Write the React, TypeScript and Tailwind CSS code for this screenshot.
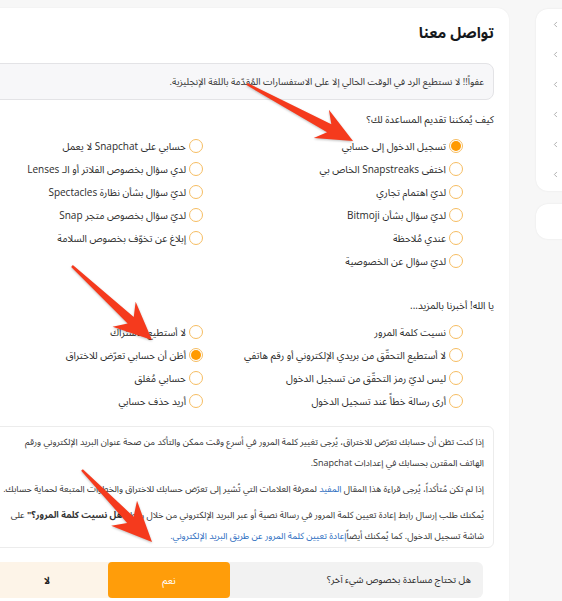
import { ChevronLeft } from "lucide-react";

type Opt = { label: string; checked?: boolean };

const helpRight: Opt[] = [
  { label: "تسجيل الدخول إلى حسابي", checked: true },
  { label: "اختفى Snapstreaks الخاص بي" },
  { label: "لديّ اهتمام تجاري" },
  { label: "لديّ سؤال بشأن Bitmoji" },
  { label: "عندي مُلاحظة" },
  { label: "لديّ سؤال عن الخصوصية" },
];

const helpLeft: Opt[] = [
  { label: "حسابي على Snapchat لا يعمل" },
  { label: "لدي سؤال بخصوص الفلاتر أو الـ Lenses" },
  { label: "لديّ سؤال بشأن نظارة Spectacles" },
  { label: "لديّ سؤال بخصوص متجر Snap" },
  { label: "إبلاغ عن تخوّف بخصوص السلامة" },
];

const moreRight: Opt[] = [
  { label: "نسيت كلمة المرور" },
  { label: "لا أستطيع التحقّق من بريدي الإلكتروني أو رقم هاتفي" },
  { label: "ليس لديّ رمز التحقّق من تسجيل الدخول" },
  { label: "أرى رسالة خطأً عند تسجيل الدخول" },
];

const moreLeft: Opt[] = [
  { label: "لا أستطيع الاشتراك" },
  { label: "أظن أن حسابي تعرّض للاختراق", checked: true },
  { label: "حسابي مُغلق" },
  { label: "أريد حذف حسابي" },
];

function Radio({ checked }: { checked?: boolean }) {
  return (
    <span className="flex h-[14px] w-[14px] shrink-0 items-center justify-center rounded-full border border-[#f6bd62] bg-white">
      {checked && <span className="h-[10px] w-[10px] rounded-full bg-[#ff9a00]" />}
    </span>
  );
}

function OptionColumn({ items }: { items: Opt[] }) {
  return (
    <div className="flex flex-col">
      {items.map((o) => (
        <div key={o.label} className="flex h-[23px] items-center gap-[3px]">
          <Radio checked={o.checked} />
          <span className="whitespace-nowrap text-[10px] leading-[16px] text-[#2b2b2b]">{o.label}</span>
        </div>
      ))}
    </div>
  );
}

function arrowPoints(x1: number, y1: number, x2: number, y2: number, hl: number, hw: number) {
  const len = Math.hypot(x2 - x1, y2 - y1);
  const ux = (x2 - x1) / len;
  const uy = (y2 - y1) / len;
  const px = -uy;
  const py = ux;
  const nx = x2 - ux * (hl - 9);
  const ny = y2 - uy * (hl - 9);
  const bx = x2 - ux * hl;
  const by = y2 - uy * hl;
  const w0 = 1.2;
  const w1 = 4.5;
  const pts = [
    [x1 + px * w0, y1 + py * w0],
    [nx + px * w1, ny + py * w1],
    [bx + px * hw, by + py * hw],
    [x2, y2],
    [bx - px * hw, by - py * hw],
    [nx - px * w1, ny - py * w1],
    [x1 - px * w0, y1 - py * w0],
  ];
  return pts.map((p) => p.join(",")).join(" ");
}

function Arrows() {
  return (
    <svg
      className="pointer-events-none absolute left-0 top-0 drop-shadow-[0_1px_1px_rgba(0,0,0,0.25)]"
      width="562"
      height="601"
    >
      <polygon points={arrowPoints(247, 84, 353, 141, 36, 16)} fill="#f53a1d" />
      <polygon points={arrowPoints(72, 266, 152, 340, 38, 17)} fill="#f53a1d" />
      <polygon points={arrowPoints(82, 470, 152, 542, 40, 18)} fill="#f53a1d" />
    </svg>
  );
}

export default function App() {
  return (
    <div
      dir="rtl"
      className="relative h-[601px] w-[562px] overflow-hidden bg-[#f7f7f7] font-['Open_Sans','Noto_Sans_Arabic',sans-serif]"
    >
      <div className="flex items-start gap-[27px] pt-2">
        {/* side nav, mostly off screen */}
        <aside className="-mr-[34px] mt-px flex w-[60px] shrink-0 flex-col gap-[13px]">
          <div className="flex flex-col rounded-xl bg-white pb-[2px] shadow-[0_0_2px_rgba(0,0,0,0.08)]">
            {[0, 1, 2, 3, 4, 5].map((i) => (
              <div key={i} className="flex h-[30px] items-center justify-end pl-[15px]">
                <ChevronLeft size={9} strokeWidth={1.5} className="text-[#777]" />
              </div>
            ))}
          </div>
          <div className="h-[35px] rounded-xl bg-white shadow-[0_0_2px_rgba(0,0,0,0.08)]" />
        </aside>

        <main className="h-[620px] w-[560px] shrink-0 rounded-xl bg-white px-[15px] pt-[10px] shadow-[0_0_2px_rgba(0,0,0,0.06)]">
          <h1 className="text-[15px] font-bold leading-[28px] text-[#16191c]">تواصل معنا</h1>

          <div className="mt-[17px] rounded-lg border border-[#e3e3e6] bg-[#f7f7f9] px-[9px] py-[9px] text-[9.5px] leading-[17px] text-[#333]">
            عفواً!! لا نستطيع الرد في الوقت الحالي إلا على الاستفسارات المُقدّمة باللغة الإنجليزية.
          </div>

          <p className="mt-[11px] text-[10px] leading-[16px] text-[#2b2b2b]">كيف يُمكننا تقديم المساعدة لك؟</p>
          <div className="mt-[7px] grid grid-cols-[260px_260px] pr-[31px]">
            <OptionColumn items={helpRight} />
            <OptionColumn items={helpLeft} />
          </div>

          <p className="mt-[25px] text-[10px] leading-[16px] text-[#2b2b2b]">يا الله! أخبرنا بالمزيد...</p>
          <div className="mt-[7px] grid grid-cols-[260px_260px] pr-[31px]">
            <OptionColumn items={moreRight} />
            <OptionColumn items={moreLeft} />
          </div>

          <div className="mt-[14px] whitespace-nowrap rounded-md border border-[#ececec] bg-white pb-px pr-[9px] pt-[4px] text-[9px] leading-[21px] text-[#333]">
            <p>
              إذا كنت تظن أن حسابك تعرّض للاختراق، يُرجى تغيير كلمة المرور في أسرع وقت ممكن والتأكد من صحة عنوان البريد الإلكتروني ورقم
              <br />
              الهاتف المقترن بحسابك في إعدادات Snapchat.
            </p>
            <p className="mt-[5px]">
              إذا لم تكن مُتأكداً، يُرجى قراءة هذا المقال <span className="text-[#2a6cc0]">المفيد</span> لمعرفة العلامات التي تُشير إلى تعرّض حسابك للاختراق والخطوات المتبعة لحماية حسابك.
            </p>
            <p className="mt-[5px]">
              يُمكنك طلب إرسال رابط إعادة تعيين كلمة المرور في رسالة نصية أو عبر البريد الإلكتروني من خلال رابط <b>"هل نسيت كلمة المرور؟"</b> على
              <br />
              شاشة تسجيل الدخول. كما يُمكنك أيضاً
              <span className="text-[#2a6cc0]">إعادة تعيين كلمة المرور عن طريق البريد الإلكتروني.</span>
            </p>
          </div>

          <div className="mr-[11px] mt-[14px] flex h-[36px] w-[497px] items-stretch rounded-md bg-[#f2f2f2]">
            <div className="flex flex-1 items-center pr-[12px] text-[9.5px] text-[#2b2b2b]">هل تحتاج مساعدة بخصوص شيء آخر؟</div>
            <button className="w-[122px] rounded-[4px] bg-[#ff9d0a] text-[10px] text-white">نعم</button>
            <button className="w-[122px] rounded-l-md bg-[#fdf4e8] text-[10px] font-bold text-[#222]">لا</button>
          </div>
        </main>
      </div>
      <Arrows />
    </div>
  );
}
